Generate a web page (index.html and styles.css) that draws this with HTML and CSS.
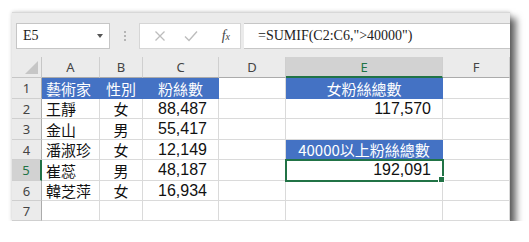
FILE: index.html
```html
<!DOCTYPE html>
<html lang="zh-Hant">
<head>
  <meta charset="UTF-8">
  <title>SUMIF 範例</title>
  <link rel="stylesheet" href="styles.css">
</head>
<body>
  <div class="window">
    <!-- Borde superior de la cinta -->
    <div class="ribbon-edge"></div>

    <!-- Barra de fórmulas -->
    <div class="formula-bar">
      <div class="name-box">
        <span>E5</span>
        <span class="caret"></span>
      </div>
      <div class="grip"><i></i><i></i><i></i></div>
      <div class="fx-buttons">
        <svg width="12" height="12" viewBox="0 0 12 12"><path d="M1.5 1.5 L10.5 10.5 M10.5 1.5 L1.5 10.5" stroke="#bdbdbd" stroke-width="1.3" fill="none"/></svg>
        <svg width="14" height="12" viewBox="0 0 14 12"><path d="M1 6.5 L5 10.5 L13 1.5" stroke="#bdbdbd" stroke-width="1.4" fill="none"/></svg>
        <span class="fx">f<sub>x</sub></span>
      </div>
      <div class="formula">=SUMIF(C2:C6,"&gt;40000")</div>
    </div>

    <!-- Hoja -->
    <div class="sheet">
      <div class="corner"></div>
      <div class="col-head">A</div>
      <div class="col-head">B</div>
      <div class="col-head">C</div>
      <div class="col-head">D</div>
      <div class="col-head active">E</div>
      <div class="col-head">F</div>

      <div class="row-head">1</div>
      <div class="cell fill">藝術家</div>
      <div class="cell fill center">性別</div>
      <div class="cell fill center">粉絲數</div>
      <div class="cell"></div>
      <div class="cell fill center">女粉絲總數</div>
      <div class="cell"></div>

      <div class="row-head">2</div>
      <div class="cell">王靜</div>
      <div class="cell center">女</div>
      <div class="cell num">88,487</div>
      <div class="cell"></div>
      <div class="cell num">117,570</div>
      <div class="cell"></div>

      <div class="row-head">3</div>
      <div class="cell">金山</div>
      <div class="cell center">男</div>
      <div class="cell num">55,417</div>
      <div class="cell"></div>
      <div class="cell"></div>
      <div class="cell"></div>

      <div class="row-head">4</div>
      <div class="cell">潘淑珍</div>
      <div class="cell center">女</div>
      <div class="cell num">12,149</div>
      <div class="cell"></div>
      <div class="cell fill center">40000以上粉絲總數</div>
      <div class="cell"></div>

      <div class="row-head active">5</div>
      <div class="cell">崔蕊</div>
      <div class="cell center">男</div>
      <div class="cell num">48,187</div>
      <div class="cell"></div>
      <div class="cell num selected">192,091</div>
      <div class="cell"></div>

      <div class="row-head">6</div>
      <div class="cell">韓芝萍</div>
      <div class="cell center">女</div>
      <div class="cell num">16,934</div>
      <div class="cell"></div>
      <div class="cell"></div>
      <div class="cell"></div>

      <div class="row-head">7</div>
      <div class="cell"></div>
      <div class="cell"></div>
      <div class="cell"></div>
      <div class="cell"></div>
      <div class="cell"></div>
      <div class="cell"></div>
    </div>
  </div>
</body>
</html>
```

FILE: styles.css
```css
/* Página */
body {
  margin: 0;
  background: #fff;
  font-family: "Noto Sans CJK TC", "Noto Sans", sans-serif;
}

/* Ventana con sombra */
.window {
  margin: 12px 0 0 12px;
  width: 498px;
  background: #ebebeb;
  box-shadow: 6px 6px 7px rgba(0, 0, 0, 0.6), 0 0 4px rgba(0, 0, 0, 0.2);
}

.ribbon-edge {
  height: 11px;
  border-top: 1px solid #d8d8d8;
  box-sizing: border-box;
}

/* Barra de fórmulas */
.formula-bar {
  display: flex;
  align-items: stretch;
  height: 26px;
  margin-bottom: 8px;
}

.name-box {
  width: 94px;
  margin-left: 4px;
  box-sizing: border-box;
  background: #fff;
  border: 1px solid #c6c6c6;
  display: flex;
  align-items: center;
  justify-content: space-between;
  padding: 0 6px 0 6px;
  font-family: "Liberation Serif", serif;
  font-size: 14px;
  color: #222;
}

.caret {
  width: 0;
  height: 0;
  border-left: 3.5px solid transparent;
  border-right: 3.5px solid transparent;
  border-top: 4px solid #555;
}

.grip {
  width: 29px;
  display: flex;
  flex-direction: column;
  align-items: center;
  justify-content: center;
  gap: 2px;
}

.grip i {
  width: 2px;
  height: 2px;
  background: #b5b5b5;
}

.fx-buttons {
  width: 102px;
  box-sizing: border-box;
  background: #fff;
  border: 1px solid #d6d6d6;
  display: flex;
  align-items: center;
  padding: 0 10px 0 14px;
  gap: 0;
}

.fx-buttons svg:first-child {
  margin-right: 18px;
}

.fx {
  margin-left: auto;
  font-family: "Liberation Serif", serif;
  font-style: italic;
  font-size: 14px;
  color: #444;
}

.fx sub {
  font-size: 10px;
  vertical-align: 0;
}

.formula {
  flex: 1;
  margin-left: 3px;
  background: #fff;
  border-top: 1px solid #c6c6c6;
  border-bottom: 1px solid #c6c6c6;
  display: flex;
  align-items: center;
  padding-left: 14px;
  font-family: "Liberation Serif", serif;
  font-size: 14px;
  color: #222;
}

/* Hoja de cálculo */
.sheet {
  display: grid;
  grid-template-columns: 30px 58px 43px 76px 67px 157px 67px;
  grid-template-rows: 21px 21px 20px 21px 20px 21px 20px 20px;
  background: #fff;
}

.corner {
  background: #ebebeb;
  border-right: 1px solid #c6c6c6;
  border-bottom: 1px solid #c6c6c6;
  position: relative;
}

.corner::after {
  content: "";
  position: absolute;
  right: 3px;
  bottom: 3px;
  border-left: 13px solid transparent;
  border-bottom: 13px solid #c6c6c6;
}

.col-head,
.row-head {
  background: #ebebeb;
  color: #444;
  font-family: "Noto Sans", sans-serif;
  font-size: 13px;
  display: flex;
  align-items: center;
  justify-content: center;
  box-sizing: border-box;
}

.col-head {
  border-right: 1px solid #cfcfcf;
  border-bottom: 1px solid #ababab;
}

.row-head {
  border-right: 1px solid #ababab;
  border-bottom: 1px solid #cfcfcf;
}

.col-head.active {
  background: #d2d2d2;
  color: #217346;
  border-bottom: 2px solid #217346;
}

.row-head.active {
  background: #d2d2d2;
  color: #217346;
  border-right: 2px solid #217346;
}

.cell {
  box-sizing: border-box;
  border-right: 1px solid #dadada;
  border-bottom: 1px solid #dadada;
  display: flex;
  align-items: center;
  padding: 0 4px;
  font-size: 15px;
  color: #111;
  white-space: nowrap;
}

.cell.center {
  justify-content: center;
}

.cell.num {
  justify-content: flex-end;
  padding-right: 11px;
  font-family: "Liberation Sans", sans-serif;
  font-size: 16px;
}

.cell.fill {
  background: #4472c4;
  border-color: #4472c4;
  color: #fff;
}

.cell.selected {
  position: relative;
  outline: 2px solid #217346;
  outline-offset: -1px;
}

.cell.selected::after {
  content: "";
  position: absolute;
  right: -3px;
  bottom: -3px;
  width: 5px;
  height: 5px;
  background: #217346;
  border: 1px solid #fff;
}
```
